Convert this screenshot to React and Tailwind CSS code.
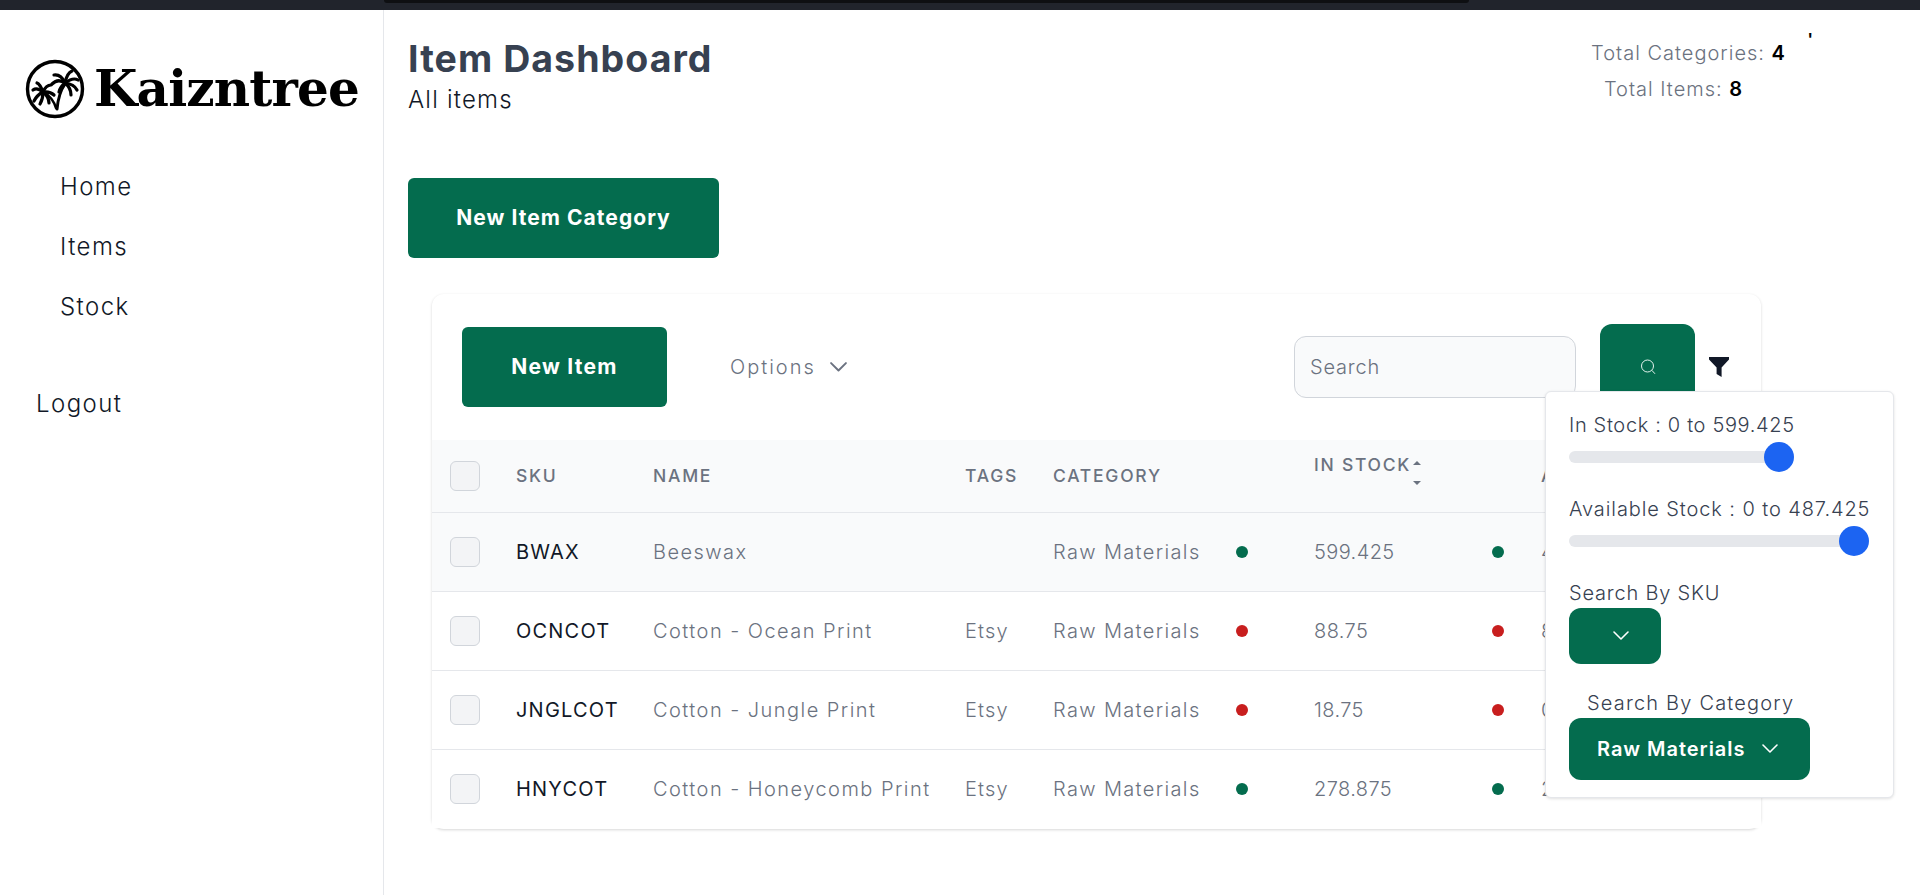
const rows = [
  { sku: "BWAX", name: "Beeswax", tags: "", cat: "Raw Materials", dot: "bg-[#046c4e]", stock: "599.425", avail: "487.425", bg: "bg-[#f9fafb]" },
  { sku: "OCNCOT", name: "Cotton - Ocean Print", tags: "Etsy", cat: "Raw Materials", dot: "bg-[#c81e1e]", stock: "88.75", avail: "88.75", bg: "bg-white" },
  { sku: "JNGLCOT", name: "Cotton - Jungle Print", tags: "Etsy", cat: "Raw Materials", dot: "bg-[#c81e1e]", stock: "18.75", avail: "0", bg: "bg-white" },
  { sku: "HNYCOT", name: "Cotton - Honeycomb Print", tags: "Etsy", cat: "Raw Materials", dot: "bg-[#046c4e]", stock: "278.875", avail: "278.875", bg: "bg-white" },
];

function Palm() {
  return (
    <svg width="60" height="60" viewBox="0 0 60 60" className="shrink-0">
      <circle cx="30" cy="30" r="27.5" fill="none" stroke="#000" strokeWidth="3.4" />
      <g fill="none" stroke="#000" strokeLinecap="round">
        <path d="M32 50 C33 40 35 32 40 25" strokeWidth="3" />
        <path d="M31 49 C29 42 25 37 19 33" strokeWidth="2.6" />
        <g strokeWidth="3.2">
          <path d="M40 24 Q33 19 27 25" />
          <path d="M40 24 Q36 15 29 16" />
          <path d="M40 24 Q42 14 47 12" />
          <path d="M40 24 Q48 18 53 21" />
          <path d="M40 24 Q49 25 52 31" />
          <path d="M40 24 Q46 29 46 36" />
          <path d="M40 24 Q35 28 34 33" />
          <path d="M18 33 Q12 28 8 31" />
          <path d="M18 33 Q15 25 12 24" />
          <path d="M18 33 Q21 26 26 26" />
          <path d="M18 33 Q25 32 29 36" />
          <path d="M18 33 Q24 38 24 44" />
          <path d="M18 33 Q18 40 15 45" />
          <path d="M18 33 Q12 36 9 42" />
        </g>
      </g>
    </svg>
  );
}

function Chevron({ w = 16, color = "#fff", sw = 1.6 }) {
  return (
    <svg width={w} height={w * 0.6} viewBox="0 0 16 9.6" fill="none">
      <path d="M1 1 L8 8 L15 1" stroke={color} strokeWidth={sw} strokeLinecap="round" strokeLinejoin="round" />
    </svg>
  );
}

function Check() {
  return <div className="w-[30px] h-[30px] rounded-[6px] border border-[#d1d5db] bg-[#f3f4f6]" />;
}

function Slider({ label, width, wide }) {
  return (
    <div>
      <div className={`text-[20px] leading-[26px] font-light text-[#374151] whitespace-nowrap ${wide ? "tracking-[0.045em]" : "tracking-[0.033em]"}`}>{label}</div>
      <div className="relative mt-[13px] h-[12px] rounded-full bg-[#e5e7eb]" style={{ width }}>
        <div className="absolute right-0 top-[-9px] w-[30px] h-[30px] rounded-full bg-[#1c64f2]" />
      </div>
    </div>
  );
}

function Th({ children, className = "" }) {
  return (
    <th className={`h-[72px] p-0 text-left align-middle font-medium text-[17.5px] tracking-[0.1em] text-[#6b7280] uppercase whitespace-nowrap ${className}`}>
      {children}
    </th>
  );
}

export default function App() {
  return (
    <div className="h-[895px] overflow-hidden bg-white flex flex-col font-['Inter','Liberation_Sans',sans-serif]">
      <div className="h-[10px] shrink-0 bg-[#21242c] flex">
        <div className="ml-[384px] w-[1085px] h-[3px] rounded-b-[6px] bg-[#0e0f12]" />
      </div>
      <div className="flex flex-1 min-h-0">
        <aside className="w-[384px] shrink-0 border-r border-[#e5e7eb]">
          <div className="flex items-center gap-[9px] pl-[25px] mt-[49px]">
            <Palm />
            <span className="font-['DejaVu_Serif',serif] font-bold text-[50px] leading-[60px] text-black tracking-[-0.017em] whitespace-nowrap">Kaizntree</span>
          </div>
          <nav className="mt-[53px] pl-[60px] flex flex-col gap-[30px] text-[24px] leading-[30px] font-light text-[#111827] tracking-[0.06em]">
            <span>Home</span>
            <span>Items</span>
            <span>Stock</span>
          </nav>
          <div className="mt-[67px] pl-[36px] text-[24px] leading-[30px] font-light text-[#111827] tracking-[0.06em]">Logout</div>
        </aside>

        <main className="flex-1 min-w-0 relative">
          <div className="flex justify-between items-start pl-[24px]">
            <div className="pt-[26px]">
              <h1 className="text-[37.5px] leading-[46px] font-bold text-[#374151] tracking-[0.028em]">Item Dashboard</h1>
              <p className="mt-[3px] text-[24px] leading-[30px] font-light text-[#111827] tracking-[0.05em]">All items</p>
            </div>
            <div className="mr-[135px] pt-[33px] w-[193px] flex flex-col items-center gap-[16px] text-[20px] leading-[20px] font-light text-[#6b7280] tracking-[0.05em] whitespace-nowrap">
              <div>Total Categories: <b className="font-semibold text-black">4</b></div>
              <div className="mr-[30px]">Total Items: <b className="font-semibold text-black">8</b></div>
            </div>
            <span className="absolute right-[107px] top-[19px] text-[16px] leading-[20px] font-bold text-black">'</span>
          </div>

          <button className="ml-[24px] mt-[63px] h-[80px] w-[311px] rounded-[6px] bg-[#046c4e] text-white font-bold text-[21px] tracking-[0.05em]">New Item Category</button>

          <section className="relative ml-[48px] mt-[36px] w-[1329px] h-[535px] rounded-[12px] bg-white shadow-[0_1px_3px_rgba(0,0,0,0.16)]">
            <div className="h-[146px] relative">
              <div className="flex items-start pl-[30px] pt-[33px]">
                <button className="h-[80px] w-[205px] rounded-[6px] bg-[#046c4e] text-white font-bold text-[21px] tracking-[0.06em]">New Item</button>
                <div className="ml-[63px] mt-[29px] flex items-center gap-[14px] text-[20px] leading-[22px] font-light text-[#6b7280] tracking-[0.1em]">
                  Options
                  <Chevron w={17} color="#6b7280" sw={1.8} />
                </div>
                <div className="ml-auto flex items-start mr-[32px]">
                  <div className="mt-[9px] w-[282px] h-[62px] rounded-[12px] border border-[#d1d5db] bg-[#f9fafb] pl-[15px] flex items-center text-[20px] font-light text-[#6b7280] tracking-[0.04em]">Search</div>
                  <div className="ml-[24px] mt-[-3px] w-[95px] h-[100px] rounded-[12px] bg-[#046c4e] flex justify-center pt-[34px]">
                    <svg width="18" height="18" viewBox="0 0 18 18" fill="none" stroke="#e5f3ee" strokeWidth="1">
                      <circle cx="8.5" cy="8" r="6" />
                      <path d="M12.8 12.3 L16 15.8" />
                    </svg>
                  </div>
                  <svg className="ml-[14px] mt-[30px]" width="20" height="20" viewBox="0 0 20 20">
                    <path d="M0 0 H20 V2.5 L12.6 10.5 V20 L7.6 17 V10.5 L0 2.5 Z" fill="#111827" />
                  </svg>
                </div>
              </div>
            </div>

            <table className="w-full border-collapse table-fixed">
              <colgroup>
                <col className="w-[84px]" />
                <col className="w-[137px]" />
                <col className="w-[312px]" />
                <col className="w-[88px]" />
                <col className="w-[183px]" />
                <col className="w-[78px]" />
                <col className="w-[178px]" />
                <col className="w-[49px]" />
                <col />
              </colgroup>
              <thead>
                <tr className="bg-[#f9fafb] border-b border-[#e5e7eb]">
                  <th className="p-0 pl-[18px]"><Check /></th>
                  <Th>SKU</Th>
                  <Th>Name</Th>
                  <Th>Tags</Th>
                  <Th>Category</Th>
                  <Th />
                  <Th className="relative">
                    <span className="absolute left-0 top-[14px] leading-[22px]">In Stock</span>
                    <svg className="absolute left-[99px] top-[21px]" width="8" height="24" viewBox="0 0 8 24" fill="#6b7280">
                      <path d="M4 0 L8 4 H0 Z" />
                      <path d="M4 24 L0 20 H8 Z" />
                    </svg>
                  </Th>
                  <Th />
                  <Th>Available</Th>
                </tr>
              </thead>
              <tbody>
                {rows.map((r) => (
                  <tr key={r.sku} className={`h-[79px] border-b border-[#e5e7eb] last:border-b-0 ${r.bg}`}>
                    <td className="p-0"><div className="pl-[18px]"><Check /></div></td>
                    <td className="p-0 text-[20px] text-[#111827] tracking-[0.06em] font-normal whitespace-nowrap">{r.sku}</td>
                    <td className="p-0 text-[20px] font-light text-[#6b7280] tracking-[0.073em] whitespace-nowrap">{r.name}</td>
                    <td className="p-0 text-[20px] font-light text-[#6b7280] tracking-[0.06em]">{r.tags}</td>
                    <td className="p-0 text-[20px] font-light text-[#6b7280] tracking-[0.068em] whitespace-nowrap">{r.cat}</td>
                    <td className="p-0"><div className={`w-[12px] h-[12px] rounded-full ${r.dot}`} /></td>
                    <td className="p-0 text-[20px] font-light text-[#6b7280] tracking-[0.02em]">{r.stock}</td>
                    <td className="p-0"><div className={`w-[12px] h-[12px] rounded-full ${r.dot}`} /></td>
                    <td className="p-0 text-[20px] font-light text-[#6b7280] tracking-[0.02em]">{r.avail}</td>
                  </tr>
                ))}
              </tbody>
            </table>
          </section>

          <div className="absolute left-[1161px] top-[381px] w-[349px] h-[407px] rounded-[6px] bg-white border border-[#e5e7eb] shadow-[0_1px_3px_rgba(0,0,0,0.12)] pl-[23px] pt-[20px]">
            <Slider label="In Stock : 0 to 599.425" width={225} />
            <div className="mt-[33px]"><Slider label="Available Stock : 0 to 487.425" width={300} wide /></div>
            <div className="mt-[33px] text-[20px] leading-[26px] font-light text-[#374151] tracking-[0.04em]">Search By SKU</div>
            <div className="mt-[2px] w-[92px] h-[56px] rounded-[12px] bg-[#046c4e] flex items-center pl-[44px]">
              <Chevron w={16} />
            </div>
            <div className="mt-[26px] pl-[18px] text-[20px] leading-[26px] font-light text-[#374151] tracking-[0.059em]">Search By Category</div>
            <div className="mt-[2px] w-[241px] h-[62px] rounded-[12px] bg-[#046c4e] flex items-center pl-[28px] gap-[17px] text-white font-semibold text-[20px] tracking-[0.048em] whitespace-nowrap">
              Raw Materials
              <Chevron w={16} />
            </div>
          </div>
        </main>
      </div>
    </div>
  );
}
